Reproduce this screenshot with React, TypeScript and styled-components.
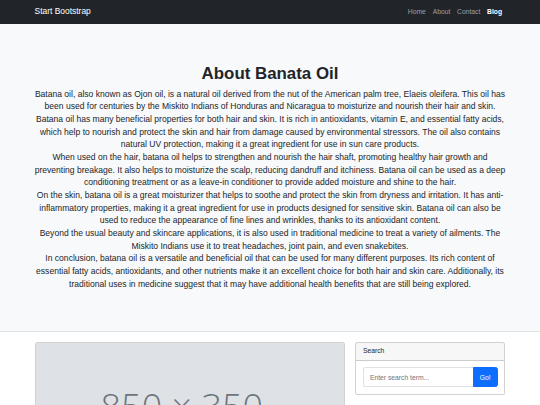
import React from "react";
import styled, { createGlobalStyle } from "styled-components";

const Global = createGlobalStyle`
  html, body { margin: 0; padding: 0; }
  body {
    font-family: "Liberation Sans", Arial, sans-serif;
    color: #212529;
    background: #fff;
    -webkit-font-smoothing: antialiased;
  }
  * { box-sizing: border-box; }
`;

const Container = styled.div`
  padding: 0 34.6px;
`;

const NavBar = styled.nav`
  background: #212529;
  height: 23.6px;
`;

const NavInner = styled(Container)`
  height: 100%;
  display: flex;
  align-items: center;
  justify-content: space-between;
`;

const Brand = styled.a`
  color: #fff;
  font-size: 8.44px;
  line-height: 1.5;
  text-decoration: none;
`;

const NavList = styled.ul`
  list-style: none;
  margin: 0;
  padding: 0;
  display: flex;
`;

const NavLink = styled.a<{ $active?: boolean }>`
  display: block;
  padding: 0 3.375px;
  font-size: 6.75px;
  line-height: 1.5;
  text-decoration: none;
  color: ${(p) => (p.$active ? "#fff" : "rgba(255,255,255,0.55)")};
  font-weight: ${(p) => (p.$active ? 600 : 400)};
`;

const Header = styled.header`
  background: #f8f9fa;
  border-bottom: 1px solid #dee2e6;
  padding: 20.25px 0;
  margin-bottom: 10.125px;
`;

const HeaderText = styled.div`
  text-align: center;
  margin: 20.25px 0;
`;

const Title = styled.h1`
  font-size: 16.875px;
  font-weight: 700;
  line-height: 1.2;
  margin: 0 0 3.375px;
`;

const Lead = styled.p`
  font-size: 8.55px;
  line-height: 12.66px;
  margin: 0;
`;

const Row = styled.div`
  display: flex;
  gap: 10.125px;
  align-items: flex-start;
`;

const MainCol = styled.div`
  width: 310.5px;
  flex: none;
`;

const SideCol = styled.div`
  flex: 1;
  min-width: 0;
`;

const Card = styled.div`
  border: 1px solid rgba(0, 0, 0, 0.175);
  border-radius: 2.5px;
  overflow: hidden;
  margin-bottom: 10.125px;
  background: #fff;
`;

const Placeholder = styled.div`
  height: 127px;
  background: #dee2e6;
  color: #6c757d;
  display: flex;
  align-items: center;
  justify-content: center;
  padding-right: 16px;
  font-family: "Open Sans", "Liberation Sans", sans-serif;
  font-weight: 300;
  font-size: 36px;
  white-space: nowrap;
`;

const CardHeader = styled.div`
  background: rgba(0, 0, 0, 0.03);
  border-bottom: 1px solid rgba(0, 0, 0, 0.175);
  padding: 3.375px 6.75px;
  font-size: 6.75px;
  line-height: 1.5;
`;

const CardBody = styled.div`
  padding: 6.75px;
`;

const InputGroup = styled.div`
  display: flex;
  height: 20px;
`;

const Input = styled.input`
  flex: 1;
  min-width: 0;
  border: 1px solid #dee2e6;
  border-right: none;
  border-radius: 2.5px 0 0 2.5px;
  padding: 0 6px;
  font-family: inherit;
  font-size: 6.75px;
  color: #212529;
  background: #fff;
  outline: none;
  &::placeholder { color: #6c757d; }
`;

const Button = styled.button`
  width: 25px;
  border: 1px solid #0d6efd;
  background: #0d6efd;
  color: #fff;
  font-family: inherit;
  font-size: 6.75px;
  border-radius: 0 2.5px 2.5px 0;
  padding: 0;
`;

const paragraphs = [
  "Batana oil, also known as Ojon oil, is a natural oil derived from the nut of the American palm tree, Elaeis oleifera. This oil has been used for centuries by the Miskito Indians of Honduras and Nicaragua to moisturize and nourish their hair and skin.",
  "Batana oil has many beneficial properties for both hair and skin. It is rich in antioxidants, vitamin E, and essential fatty acids, which help to nourish and protect the skin and hair from damage caused by environmental stressors. The oil also contains natural UV protection, making it a great ingredient for use in sun care products.",
  "When used on the hair, batana oil helps to strengthen and nourish the hair shaft, promoting healthy hair growth and preventing breakage. It also helps to moisturize the scalp, reducing dandruff and itchiness. Batana oil can be used as a deep conditioning treatment or as a leave-in conditioner to provide added moisture and shine to the hair.",
  "On the skin, batana oil is a great moisturizer that helps to soothe and protect the skin from dryness and irritation. It has anti-inflammatory properties, making it a great ingredient for use in products designed for sensitive skin. Batana oil can also be used to reduce the appearance of fine lines and wrinkles, thanks to its antioxidant content.",
  "Beyond the usual beauty and skincare applications, it is also used in traditional medicine to treat a variety of ailments. The Miskito Indians use it to treat headaches, joint pain, and even snakebites.",
  "In conclusion, batana oil is a versatile and beneficial oil that can be used for many different purposes. Its rich content of essential fatty acids, antioxidants, and other nutrients make it an excellent choice for both hair and skin care. Additionally, its traditional uses in medicine suggest that it may have additional health benefits that are still being explored.",
];

export default function App() {
  return (
    <>
      <Global />
      <NavBar>
        <NavInner>
          <Brand href="#!">Start Bootstrap</Brand>
          <NavList>
            <li><NavLink href="#!">Home</NavLink></li>
            <li><NavLink href="#!">About</NavLink></li>
            <li><NavLink href="#!">Contact</NavLink></li>
            <li><NavLink href="#!" $active>Blog</NavLink></li>
          </NavList>
        </NavInner>
      </NavBar>
      <Header>
        <Container>
          <HeaderText>
            <Title>About Banata Oil</Title>
            {paragraphs.map((t, i) => (
              <Lead key={i}>{t}</Lead>
            ))}
          </HeaderText>
        </Container>
      </Header>
      <Container>
        <Row>
          <MainCol>
            <Card>
              <Placeholder>850 × 350</Placeholder>
            </Card>
          </MainCol>
          <SideCol>
            <Card>
              <CardHeader>Search</CardHeader>
              <CardBody>
                <InputGroup>
                  <Input placeholder="Enter search term..." />
                  <Button>Go!</Button>
                </InputGroup>
              </CardBody>
            </Card>
            <Card>
              <CardHeader>Categories</CardHeader>
              <CardBody />
            </Card>
          </SideCol>
        </Row>
      </Container>
    </>
  );
}
